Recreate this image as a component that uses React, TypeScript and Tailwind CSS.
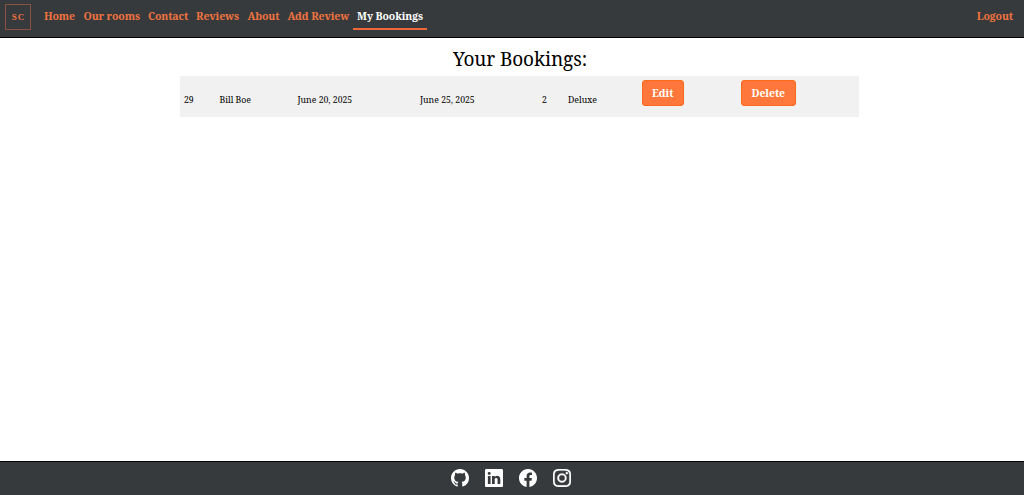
import { BsFacebook, BsGithub, BsInstagram, BsLinkedin } from "react-icons/bs";

const links = [
  { label: "Home", width: "w-[39.5px]" },
  { label: "Our rooms", width: "w-[64.5px]" },
  { label: "Contact", width: "w-[48px]" },
  { label: "Reviews", width: "w-[51.5px]" },
  { label: "About", width: "w-[40px]" },
  { label: "Add Review", width: "w-[69.5px]" },
];

const cells = [
  { text: "29", width: "w-[35.5px]" },
  { text: "Bill Boe", width: "w-[78px]" },
  { text: "June 20, 2025", width: "w-[122.5px]" },
  { text: "June 25, 2025", width: "w-[122px]" },
  { text: "2", width: "w-[26px]" },
  { text: "Deluxe", width: "w-[73.5px]" },
];

const button =
  "flex h-[26px] items-center justify-center rounded-[3px] border border-[#ff6a1a] bg-[#ff773a] pt-px text-[10.5px] font-bold tracking-[-0.08px] text-white";

export default function App() {
  return (
    <div className="flex h-[495px] flex-col bg-white font-['Noto_Serif','DejaVu_Serif',serif] text-black">
      <header className="flex h-[38px] shrink-0 border-b border-black bg-[#373a3c] pl-[5px] pr-[11px] text-[10.5px] font-bold tracking-[-0.1px] text-[#f2733f]">
        <div className="mt-[4px] flex h-[26px] w-[26px] items-center justify-center border border-[#8b5140] pl-px pt-px font-['Liberation_Serif',serif] text-[9px] tracking-[1px]">
          SC
        </div>
        <nav className="ml-[13px] flex">
          {links.map(({ label, width }) => (
            <a key={label} className={`shrink-0 whitespace-nowrap pt-[8px] leading-[16px] ${width}`}>
              {label}
            </a>
          ))}
          <a className="-ml-[4px] flex h-[30px] w-[74px] shrink-0 justify-center whitespace-nowrap border-b-2 border-[#f2673a] pt-[8px] leading-[16px] text-white">
            My Bookings
          </a>
        </nav>
        <a className="ml-auto pt-[8px] leading-[16px]">Logout</a>
      </header>

      <main className="flex flex-1 flex-col">
        <h1 className="mt-[5px] h-[33px] pl-[16px] pt-px text-center text-[19px] leading-[31px] tracking-[-0.1px]">
          Your Bookings:
        </h1>
        <div className="ml-[180px] flex h-[41px] w-[679px] bg-[#f1f1f1] pl-[4px]">
          {cells.map(({ text, width }) => (
            <div
              key={text}
              className={`shrink-0 whitespace-nowrap pt-[18px] text-[8.7px] leading-[13px] ${width}`}
            >
              {text}
            </div>
          ))}
          <button className={`mt-[4px] w-[42.5px] ${button}`}>Edit</button>
          <button className={`ml-[57px] mt-[4px] w-[54.5px] ${button}`}>Delete</button>
        </div>
      </main>

      <footer className="flex h-[34px] shrink-0 items-center justify-center gap-[16px] border-t border-black bg-[#373a3c] pb-px pr-[2px] text-[18px] text-white">
        <BsGithub />
        <BsLinkedin />
        <BsFacebook />
        <BsInstagram className="stroke-white stroke-[0.25]" />
      </footer>
    </div>
  );
}
